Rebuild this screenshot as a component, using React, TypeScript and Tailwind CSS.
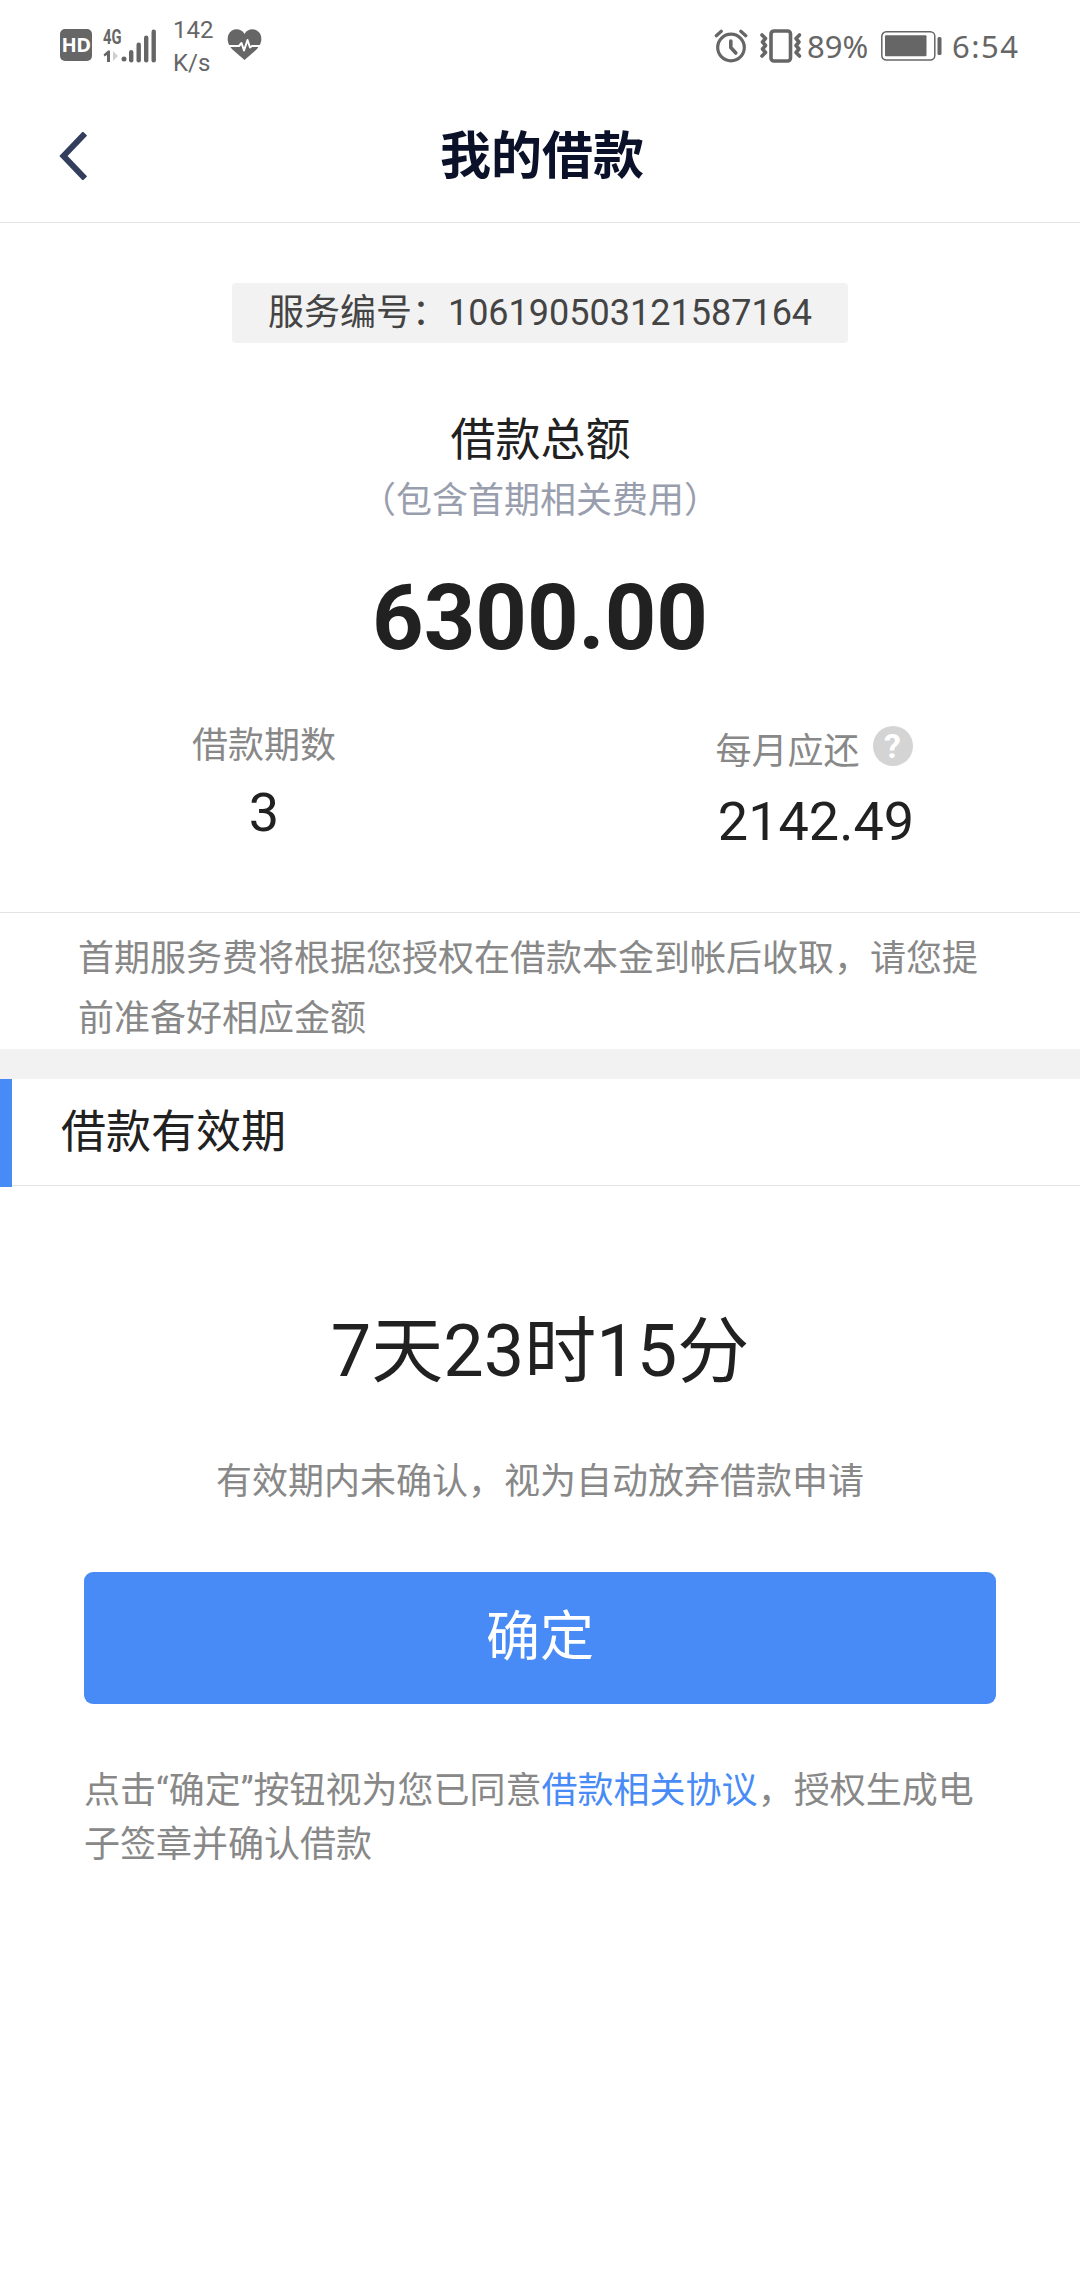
import React from 'react';

const HdIcon = () => (
  <div className="w-8 h-8 rounded-[5px] bg-[#666666] flex items-center justify-center">
    <span className="font-['Open_Sans',sans-serif] text-[20px] leading-none font-bold tracking-[-0.5px] text-white">HD</span>
  </div>
);

const SignalIcon = () => (
  <svg className="w-[54px] h-[46px]" viewBox="0 -10 54 46" fill="#666666">
    <text x="0" y="17" fontFamily="Roboto, sans-serif" fontSize="21" fontWeight="700" textLength="18.5" lengthAdjust="spacingAndGlyphs">4G</text>
    <path d="M0.5 27.5 L5 23.5 H7 V35 H4 V28 L1.5 29.5 Z" />
    <path d="M10 24 L15 29 L10 34 Z" fill="#cfcfcf" />
    <circle cx="21" cy="32" r="2.5" />
    <rect x="26" y="23" width="4.4" height="12.5" rx="2.2" />
    <rect x="33.5" y="15.5" width="4.4" height="20" rx="2.2" />
    <rect x="41" y="8.5" width="4.4" height="27" rx="2.2" />
    <rect x="48.5" y="2.5" width="4.4" height="33" rx="2.2" />
  </svg>
);

const HeartIcon = () => (
  <svg className="w-[35px] h-8" viewBox="0 0 35 32">
    <path d="M17.5 5 C14 -1.5 4.5 -1 1.5 5.5 C-1 12 2.5 17.5 6 21 L17.5 31 L29 21 C32.5 17.5 36 12 33.5 5.5 C30.5 -1 21 -1.5 17.5 5 Z" fill="#666666" />
    <path d="M1 17 H12 L14.5 14 L17 21.5 L20.5 11 L23 18.5 L25 17 H34" fill="none" stroke="#ffffff" strokeWidth="2" strokeLinejoin="round" />
  </svg>
);

const AlarmIcon = () => (
  <svg className="w-[34px] h-[34px]" viewBox="0 0 34 34" fill="none" stroke="#666666" strokeWidth="3.2" strokeLinecap="round">
    <circle cx="17" cy="18.5" r="13.3" />
    <path d="M16.8 12 V18.5 L21.8 24" strokeWidth="3.6" strokeLinejoin="round" />
    <path d="M2.3 6.8 L7.3 2.3 M26.8 2.3 L31.8 6.8" />
  </svg>
);

const VibrateIcon = () => (
  <svg className="w-[44px] h-[34px]" viewBox="0 0 44 34" fill="none" stroke="#666666">
    <rect x="12" y="2" width="19.5" height="30" rx="3" strokeWidth="3.6" />
    <path d="M3 6 L6.5 9.5 L3.5 13 L6.5 16.5 L3.5 20 L6.5 23.5 L3 27" strokeWidth="3.6" strokeLinecap="round" strokeLinejoin="round" />
    <path d="M40.5 6 L37 9.5 L40 13 L37 16.5 L40 20 L37 23.5 L40.5 27" strokeWidth="3.6" strokeLinecap="round" strokeLinejoin="round" />
  </svg>
);

const BatteryIcon = () => (
  <svg className="w-[61px] h-[30px]" viewBox="0 0 61 30">
    <rect x="0.8" y="0.8" width="53" height="28.2" rx="4.5" fill="none" stroke="#666666" strokeWidth="1.5" />
    <rect x="4" y="4.3" width="41.5" height="21" rx="1" fill="#666666" />
    <rect x="56.5" y="6" width="4" height="18" rx="1.5" fill="#666666" />
  </svg>
);

const StatusBar = () => (
  <div className="h-[90px] flex items-center text-[#666666] pl-[60px] pr-[58px]">
    <HdIcon />
    <div className="ml-[11px] -mt-2.5"><SignalIcon /></div>
    <div className="ml-4 w-12 pt-0.5 text-2xl leading-8">
      <div>142</div>
      <div className="pt-px">K/s</div>
    </div>
    <div className="ml-1.5"><HeartIcon /></div>
    <div className="ml-auto pt-0.5 flex items-center">
      <AlarmIcon />
      <div className="ml-[11px]"><VibrateIcon /></div>
      <div className="ml-1 w-[64px] whitespace-nowrap font-['Noto_Sans',sans-serif] text-[31px] leading-8">89%</div>
      <div className="ml-2.5"><BatteryIcon /></div>
      <div className="ml-2.5 w-[70px] whitespace-nowrap font-['Noto_Sans',sans-serif] text-[31px] leading-8 tracking-[1.5px]">6:54</div>
    </div>
  </div>
);

const Header = () => (
  <header className="h-[133px] grid grid-cols-[120px_1fr_120px] items-center border-b border-[#e3e3e3]">
    <button className="pl-[59px]" aria-label="返回">
      <svg className="w-7 h-12" viewBox="0 0 28 48" fill="none" stroke="#333d5c" strokeWidth="6">
        <path d="M26 1.5 L4.5 24 L26 46.5" />
      </svg>
    </button>
    <h1 className="pl-1 text-center text-[51px] leading-none font-bold text-[#0a1128]">我的借款</h1>
  </header>
);

const App: React.FC = () => {
  return (
    <div className="w-[1080px] min-h-[2280px] bg-white text-[#212121] font-['Roboto','Noto_Sans_CJK_SC',sans-serif]" lang="zh-CN">
      <StatusBar />
      <Header />

      {/* Loan summary */}
      <section className="h-[690px] pt-[60px] border-b border-[#e3e3e3] flex flex-col items-center">
        <div className="w-[616px] h-[60px] rounded bg-[#f2f2f2] text-center text-4xl leading-[61px] text-[#444444]">
          服务编号：106190503121587164
        </div>
        <h2 className="mt-[68px] pl-px text-[45px] leading-[60px]">借款总额</h2>
        <p className="mt-[3px] text-4xl leading-[54px] text-[#999eae]">（包含首期相关费用）</p>
        <div className="mt-[37px] text-[90px] leading-[108px] font-bold">6300.00</div>
        <div className="mt-[46px] w-full grid grid-cols-2 gap-6 text-center">
          <div>
            <div className="text-4xl leading-[54px] text-[#888888]">借款期数</div>
            <div className="mt-[7px] text-[54px] leading-[66px]">3</div>
          </div>
          <div>
            <div className="pr-1 flex justify-center gap-[13px] text-4xl text-[#888888]">
              <span className="pt-1.5 leading-[54px]">每月应还</span>
              <span className="mt-[7px] size-10 rounded-full bg-[#d4d4d4] text-center text-[34px] leading-[41px] font-bold text-white">?</span>
            </div>
            <div className="mt-2.5 text-[54px] leading-[66px]">2142.49</div>
          </div>
        </div>
      </section>

      <p className="h-[136px] pt-4 px-[78px] text-4xl leading-[60px] text-[#888888]">
        首期服务费将根据您授权在借款本金到帐后收取，请您提前准备好相应金额
      </p>
      <div className="h-[30px] bg-[#f2f2f2]" />

      {/* Validity period */}
      <div className="h-[108px] flex">
        <div className="w-3 bg-[#488bf6]" />
        <h2 className="mb-px flex-1 border-b border-[#e3e3e3] pl-[49px] text-[45px] leading-[107px]">借款有效期</h2>
      </div>

      <section className="pt-[120px] px-[84px]">
        <div className="text-center text-[72px] leading-[90px]">7天23时15分</div>
        <p className="mt-[58px] text-center text-4xl leading-[54px] text-[#888888]">
          有效期内未确认，视为自动放弃借款申请
        </p>
        <button className="mt-[63px] block w-full h-[132px] rounded-[9px] bg-[#488bf6] text-[54px] leading-[132px] text-white">
          确定
        </button>
        <p className="mt-[60px] text-4xl leading-[54px] text-[#888888]">
          点击“确定”按钮视为您已同意<a className="text-[#488bf6]">借款相关协议</a>，授权生成电子签章并确认借款
        </p>
      </section>
    </div>
  );
};

export default App;
